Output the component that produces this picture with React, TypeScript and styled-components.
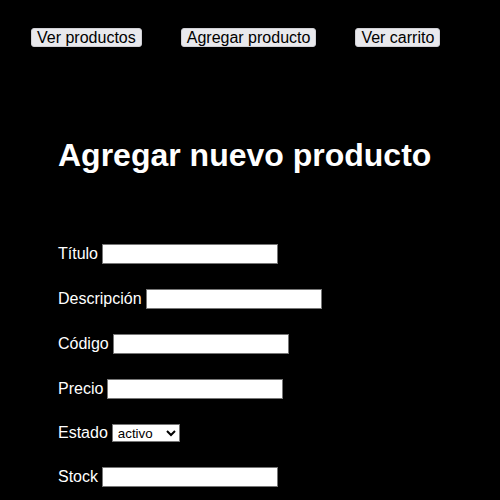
import React from "react";
import styled, { createGlobalStyle } from "styled-components";

const GlobalStyle = createGlobalStyle`
  html, body {
    margin: 0;
    padding: 0;
    background: #000;
    color: #fff;
    font-family: "Liberation Sans", Arial, sans-serif;
  }
`;

const Page = styled.div`
  min-height: 500px;
  background: #000;
`;

const Nav = styled.nav`
  display: flex;
  gap: 39px;
  padding: 28px 0 0 31px;
`;

const NavButton = styled.button`
  height: 19px;
  box-sizing: border-box;
  padding: 0 5px;
  font-family: "Liberation Sans", Arial, sans-serif;
  font-size: 16px;
  line-height: 17px;
  color: #000;
  background: #e9e9ed;
  border: 1px solid #cfcfd4;
  border-radius: 3px;
  cursor: pointer;
`;

const Main = styled.main`
  padding: 0 0 0 58px;
`;

const Title = styled.h1`
  margin: 90px 0 70px;
  font-size: 32px;
  font-weight: bold;
  line-height: 37px;
`;

const Form = styled.form`
  display: flex;
  flex-direction: column;
  gap: 24px;
`;

const Row = styled.div<{ $h?: number }>`
  display: flex;
  align-items: baseline;
  gap: 4px;
  height: ${(p) => p.$h ?? 21}px;
  font-size: 16px;
`;

const Label = styled.label`
  font-size: 16px;
  color: #fff;
`;

const TextInput = styled.input`
  width: 176px;
  height: 20px;
  box-sizing: border-box;
  padding: 1px 2px;
  font-family: "Liberation Sans", Arial, sans-serif;
  font-size: 13.33px;
  background: #fff;
  color: #000;
  border: 1px solid #767676;
  border-radius: 0;
`;

const Select = styled.select`
  width: 68px;
  height: 18px;
  box-sizing: border-box;
  padding: 0 0 0 1px;
  font-family: "Liberation Sans", Arial, sans-serif;
  font-size: 13.33px;
  background: #fff;
  color: #000;
  border: 1px solid #767676;
  border-radius: 0;
`;

const fields = ["Título", "Descripción", "Código", "Precio"];

export default function App() {
  return (
    <Page>
      <GlobalStyle />
      <Nav>
        <NavButton>Ver productos</NavButton>
        <NavButton>Agregar producto</NavButton>
        <NavButton>Ver carrito</NavButton>
      </Nav>
      <Main>
        <Title>Agregar nuevo producto</Title>
        <Form onSubmit={(e) => e.preventDefault()}>
          {fields.map((f) => (
            <Row key={f}>
              <Label>{f}</Label>
              <TextInput type="text" />
            </Row>
          ))}
          <Row $h={19}>
            <Label>Estado</Label>
            <Select defaultValue="activo">
              <option value="activo">activo</option>
              <option value="inactivo">inactivo</option>
            </Select>
          </Row>
          <Row>
            <Label>Stock</Label>
            <TextInput type="text" />
          </Row>
        </Form>
      </Main>
    </Page>
  );
}
